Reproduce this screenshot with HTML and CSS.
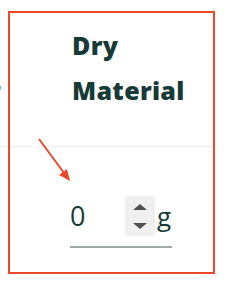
FILE: index.html
```html
<!doctype html>
<html lang="en">
<head>
<meta charset="utf-8">
<title>Dry Material</title>
<link rel="stylesheet" href="styles.css">
</head>
<body>

<div class="table">
    <div class="col col-prev">
        <div class="head"><span class="short">Total</span><br>Water</div>
    </div>
    <div class="col">
        <div class="head">Dry<br>Material</div>
        <div class="field">
            <span class="value">0</span>
            <span class="spin"><i class="up"></i><i class="down"></i></span>
            <span class="unit">g</span>
        </div>
    </div>
</div>

<!-- annotation -->
<div class="mark"></div>
<svg class="arrow" width="40" height="50" viewBox="0 0 40 50">
    <line x1="1" y1="1" x2="26" y2="35" stroke="#ea4a2c" stroke-width="2"/>
    <polygon points="32,43 21,37 29,31" fill="#ea4a2c"/>
</svg>

</body>
</html>
```

FILE: styles.css
```css
body{
    margin: 0;
    background: #fff;
    font-family: "Open Sans", Lato, sans-serif;
    color: #173a38;
}
.table{
    display: flex;
    justify-content: flex-end;
    gap: 5px;
    width: 218px;
    overflow: hidden;
}
.col{
    flex: 0 0 180px;
}
.col-prev{
    flex: 0 0 160px;
}
.head{
    padding: 23px 0 33px 34px;
    border-bottom: 1px solid #ececf1;
    font-size: 25px;
    font-weight: 800;
    letter-spacing: 0.3px;
    line-height: 45px;
}
.col-prev .head{
    padding-left: 0;
    padding-right: 32px;
    text-align: right;
}
.col-prev .short{
    margin-right: 30px;
}
.field{
    display: flex;
    align-items: center;
    width: 102px;
    height: 40px;
    margin: 49px 0 0 32px;
    padding-bottom: 10px;
    border-bottom: 2px solid #9eaaa9;
    font-size: 26px;
    line-height: 40px;
}
.value{
    flex: 1;
    font-size: 27px;
    font-weight: 400;
}
.spin{
    display: flex;
    flex-direction: column;
    justify-content: center;
    gap: 13px;
    align-items: center;
    width: 30px;
    height: 40px;
    background: #f0f0f0;
}
.spin i{
    width: 0;
    height: 0;
    border-left: 7px solid transparent;
    border-right: 7px solid transparent;
}
.spin .up{
    border-bottom: 6px solid #505050;
}
.spin .down{
    border-top: 6px solid #505050;
}
.unit{
    margin-left: 2px;
    margin-right: 1px;
}
.mark{
    position: absolute;
    left: 8px;
    top: 11px;
    width: 203px;
    height: 259px;
    border: 2.5px solid #ea4a2c;
}
.arrow{
    position: absolute;
    left: 38px;
    top: 138px;
}
```
